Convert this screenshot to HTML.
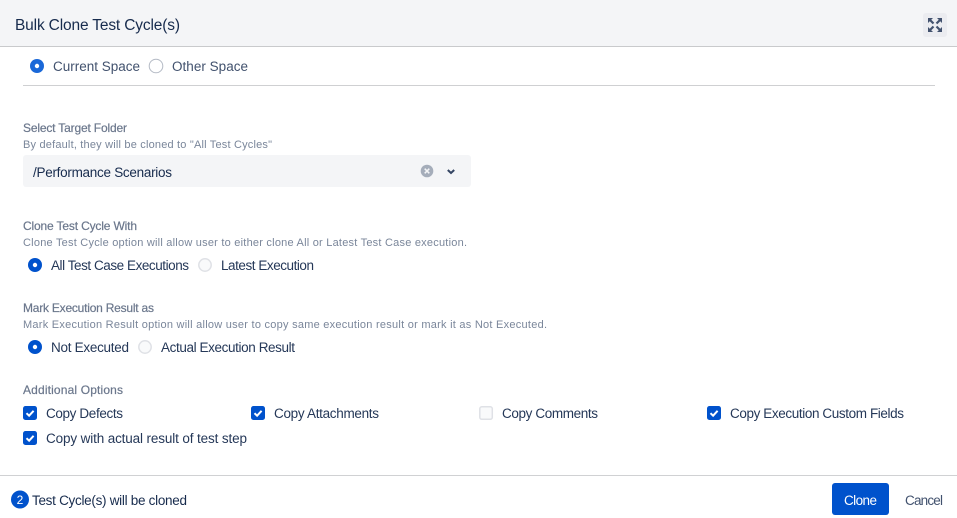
<!DOCTYPE html>
<html><head><meta charset="utf-8"><title>Bulk Clone Test Cycle(s)</title>
<style>
html,body{margin:0;padding:0;background:#fff;width:957px;height:518px;overflow:hidden}
svg{display:block}
text{font-family:"Liberation Sans",sans-serif;font-size:13.5px;fill:#253858}
.h{font-size:12px;fill:#6b778c;stroke:#6b778c;stroke-width:.2px}
.s{font-size:11px;fill:#7a869a}
.g{fill:#42526e}
</style></head><body>
<svg width="957" height="518" viewBox="0 0 957 518" xmlns="http://www.w3.org/2000/svg">
<rect x="0" y="0" width="957" height="46" fill="#f4f5f7"/>
<rect x="0" y="46" width="957" height="1" fill="#c9cacc"/>
<text x="15" y="30" style="font-size:15.5px;fill:#172b4d" textLength="165">Bulk Clone Test Cycle(s)</text>
<rect x="923" y="13" width="24" height="24" rx="3" fill="#ebecf0"/>
<g fill="#42526e" stroke="#42526e">
<path d="M928 18h5l-5 5z" stroke="none"/><path d="M930 20l3.500 3.500" stroke-width="2.200"/>
<path d="M942 18h-5l5 5z" stroke="none"/><path d="M940 20l-3.500 3.500" stroke-width="2.200"/>
<path d="M928 32h5l-5-5z" stroke="none"/><path d="M930 30l3.500-3.500" stroke-width="2.200"/>
<path d="M942 32h-5l5-5z" stroke="none"/><path d="M940 30l-3.500-3.500" stroke-width="2.200"/>
</g>

<circle cx="37" cy="66" r="7" fill="#1a68d8"/><circle cx="37" cy="66" r="2.2" fill="#fff"/>
<text x="53" y="71" class="g" textLength="87">Current Space</text>
<circle cx="156" cy="66" r="6.800" fill="#fff" stroke="#b3b9c4" stroke-width="1"/>
<text x="172" y="71" class="g" textLength="76">Other Space</text>
<rect x="23" y="85" width="912" height="1" fill="#cfd0d2"/>

<text x="23" y="132" class="h" textLength="104">Select Target Folder</text>
<text x="23" y="148" class="s" textLength="249">By default, they will be cloned to "All Test Cycles"</text>
<rect x="23" y="155" width="448" height="32" rx="3" fill="#f4f5f7"/>
<text x="33" y="177" textLength="139" style="fill:#172b4d">/Performance Scenarios</text>
<circle cx="427" cy="171" r="6.3" fill="#a5adba"/>
<path d="M424.7 168.7l4.600 4.600M429.3 168.7l-4.600 4.600" stroke="#f4f5f7" stroke-width="1.500" fill="none"/>
<path d="M447.8 170l3.200 3 3.200-3" stroke="#344563" stroke-width="2" fill="none"/>

<text x="23" y="230" class="h" textLength="114">Clone Test Cycle With</text>
<text x="23" y="246" class="s" textLength="444">Clone Test Cycle option will allow user to either clone All or Latest Test Case execution.</text>
<circle cx="35" cy="265" r="7" fill="#0052cc"/><circle cx="35" cy="265" r="2.2" fill="#fff"/>
<text x="51" y="270" textLength="138">All Test Case Executions</text>
<circle cx="205" cy="265" r="6.200" fill="#f9fafb" stroke="#dfe1e6" stroke-width="1.500"/>
<text x="221" y="270" textLength="93">Latest Execution</text>

<text x="23" y="312" class="h" textLength="131">Mark Execution Result as</text>
<text x="23" y="328" class="s" textLength="524">Mark Execution Result option will allow user to copy same execution result or mark it as Not Executed.</text>
<circle cx="35" cy="347" r="7" fill="#0052cc"/><circle cx="35" cy="347" r="2.2" fill="#fff"/>
<text x="51" y="352" textLength="78">Not Executed</text>
<circle cx="145" cy="347" r="6.200" fill="#f9fafb" stroke="#dfe1e6" stroke-width="1.500"/>
<text x="161" y="352" textLength="134">Actual Execution Result</text>

<text x="23" y="394" class="h" textLength="100">Additional Options</text>

<rect x="23" y="406" width="14" height="14" rx="2.500" fill="#0052cc"/>
<path d="M26.500 413.200l2.600 2.500 4.500-4.900" stroke="#fff" stroke-width="2" fill="none"/>
<text x="46" y="418" textLength="77">Copy Defects</text>

<rect x="251" y="406" width="14" height="14" rx="2.500" fill="#0052cc"/>
<path d="M254.500 413.200l2.600 2.500 4.500-4.900" stroke="#fff" stroke-width="2" fill="none"/>
<text x="274" y="418" textLength="105">Copy Attachments</text>

<rect x="479.800" y="406.800" width="12.500" height="12.500" rx="2" fill="#f9fafb" stroke="#dfe1e6" stroke-width="1.500"/>
<text x="502" y="418" textLength="96">Copy Comments</text>

<rect x="707" y="406" width="14" height="14" rx="2.500" fill="#0052cc"/>
<path d="M710.500 413.200l2.600 2.500 4.500-4.900" stroke="#fff" stroke-width="2" fill="none"/>
<text x="730" y="418" textLength="174">Copy Execution Custom Fields</text>

<rect x="23" y="431" width="14" height="14" rx="2.500" fill="#0052cc"/>
<path d="M26.500 438.200l2.600 2.500 4.500-4.900" stroke="#fff" stroke-width="2" fill="none"/>
<text x="46" y="443" textLength="201">Copy with actual result of test step</text>

<rect x="0" y="475" width="957" height="1" fill="#d0d1d3"/>
<circle cx="20" cy="499.500" r="9" fill="#0052cc"/>
<text x="20" y="504" text-anchor="middle" style="font-size:12px;fill:#fff">2</text>
<text x="32" y="505" textLength="155" style="fill:#172b4d">Test Cycle(s) will be cloned</text>

<rect x="832" y="483" width="57" height="32" rx="3" fill="#0052cc"/>
<text x="844" y="505" textLength="33" style="fill:#fff">Clone</text>
<text x="905" y="505" textLength="38" class="g">Cancel</text>
</svg>
</body></html>
